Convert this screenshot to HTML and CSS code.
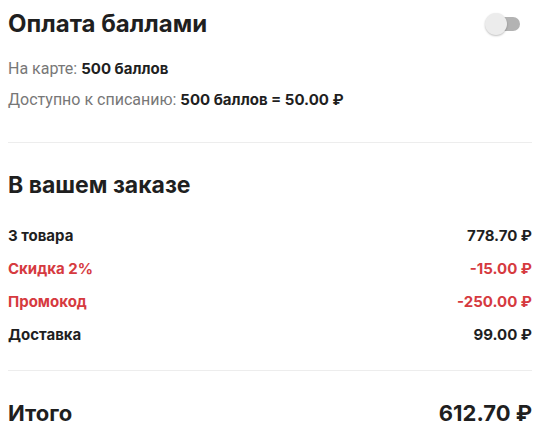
FILE: index.html
```html
<!DOCTYPE html>
<html lang="ru">
<head>
    <meta charset="UTF-8">
    <title>Оплата</title>
    <link rel="stylesheet" href="styles.css">
</head>
<body>

<section class="points">
    <div class="points-head">
        <h2 class="title">Оплата баллами</h2>
        <span class="toggle"><span class="toggle-knob"></span></span>
    </div>
    <p class="info">На карте: <b>500 баллов</b></p>
    <p class="info">Доступно к списанию: <b>500 баллов = 50.00 ₽</b></p>
</section>

<hr class="divider">

<section class="order">
    <h2 class="title title-small">В вашем заказе</h2>
    <div class="row"><span>3 товара</span><span>778.70 ₽</span></div>
    <div class="row red"><span>Скидка 2%</span><span>-15.00 ₽</span></div>
    <div class="row red"><span>Промокод</span><span>-250.00 ₽</span></div>
    <div class="row"><span>Доставка</span><span>99.00 ₽</span></div>
</section>

<hr class="divider">

<div class="total">
    <span>Итого</span>
    <span>612.70 ₽</span>
</div>

</body>
</html>
```

FILE: styles.css
```css
body {
    margin: 0;
    padding: 9px 12px 0 8px;
    background: #fff;
    color: #222;
    font-family: Inter, "Noto Sans", sans-serif;
}

.points {
    padding-bottom: 27px;
}

.points-head {
    display: flex;
    justify-content: space-between;
    align-items: center;
}

.title {
    margin: 0;
    font-size: 24px;
    line-height: 30px;
    font-weight: 700;
    color: #1f1f1f;
}

.title-small {
    font-size: 23px;
    margin-top: 27px;
    margin-bottom: 19px;
}

.toggle {
    position: relative;
    width: 31px;
    height: 14px;
    margin-right: 12px;
    border-radius: 7px;
    background: #b3b3b3;
}

.toggle-knob {
    position: absolute;
    left: -4px;
    top: -4px;
    width: 22px;
    height: 22px;
    border-radius: 50%;
    background: #ececec;
    box-shadow: 0 1px 2px rgba(0, 0, 0, 0.25);
}

.info {
    margin: 0;
    font-family: Roboto, "Noto Sans", sans-serif;
    font-size: 16px;
    line-height: 31px;
    color: #777;
}

.info:first-of-type {
    margin-top: 14px;
}

.info b {
    font-family: Inter, "Noto Sans", sans-serif;
    font-size: 15px;
    font-weight: 700;
    color: #1f1f1f;
}

.divider {
    margin: 0;
    border: 0;
    border-top: 1px solid #ededed;
}

.order {
    padding-bottom: 19px;
}

.row {
    display: flex;
    justify-content: space-between;
    font-size: 15px;
    line-height: 33px;
    font-weight: 700;
    color: #1f1f1f;
}

.row.red {
    color: #d63a3f;
}

.total {
    display: flex;
    justify-content: space-between;
    margin-top: 27px;
    font-size: 22px;
    line-height: 30px;
    font-weight: 700;
    color: #1f1f1f;
}
```
